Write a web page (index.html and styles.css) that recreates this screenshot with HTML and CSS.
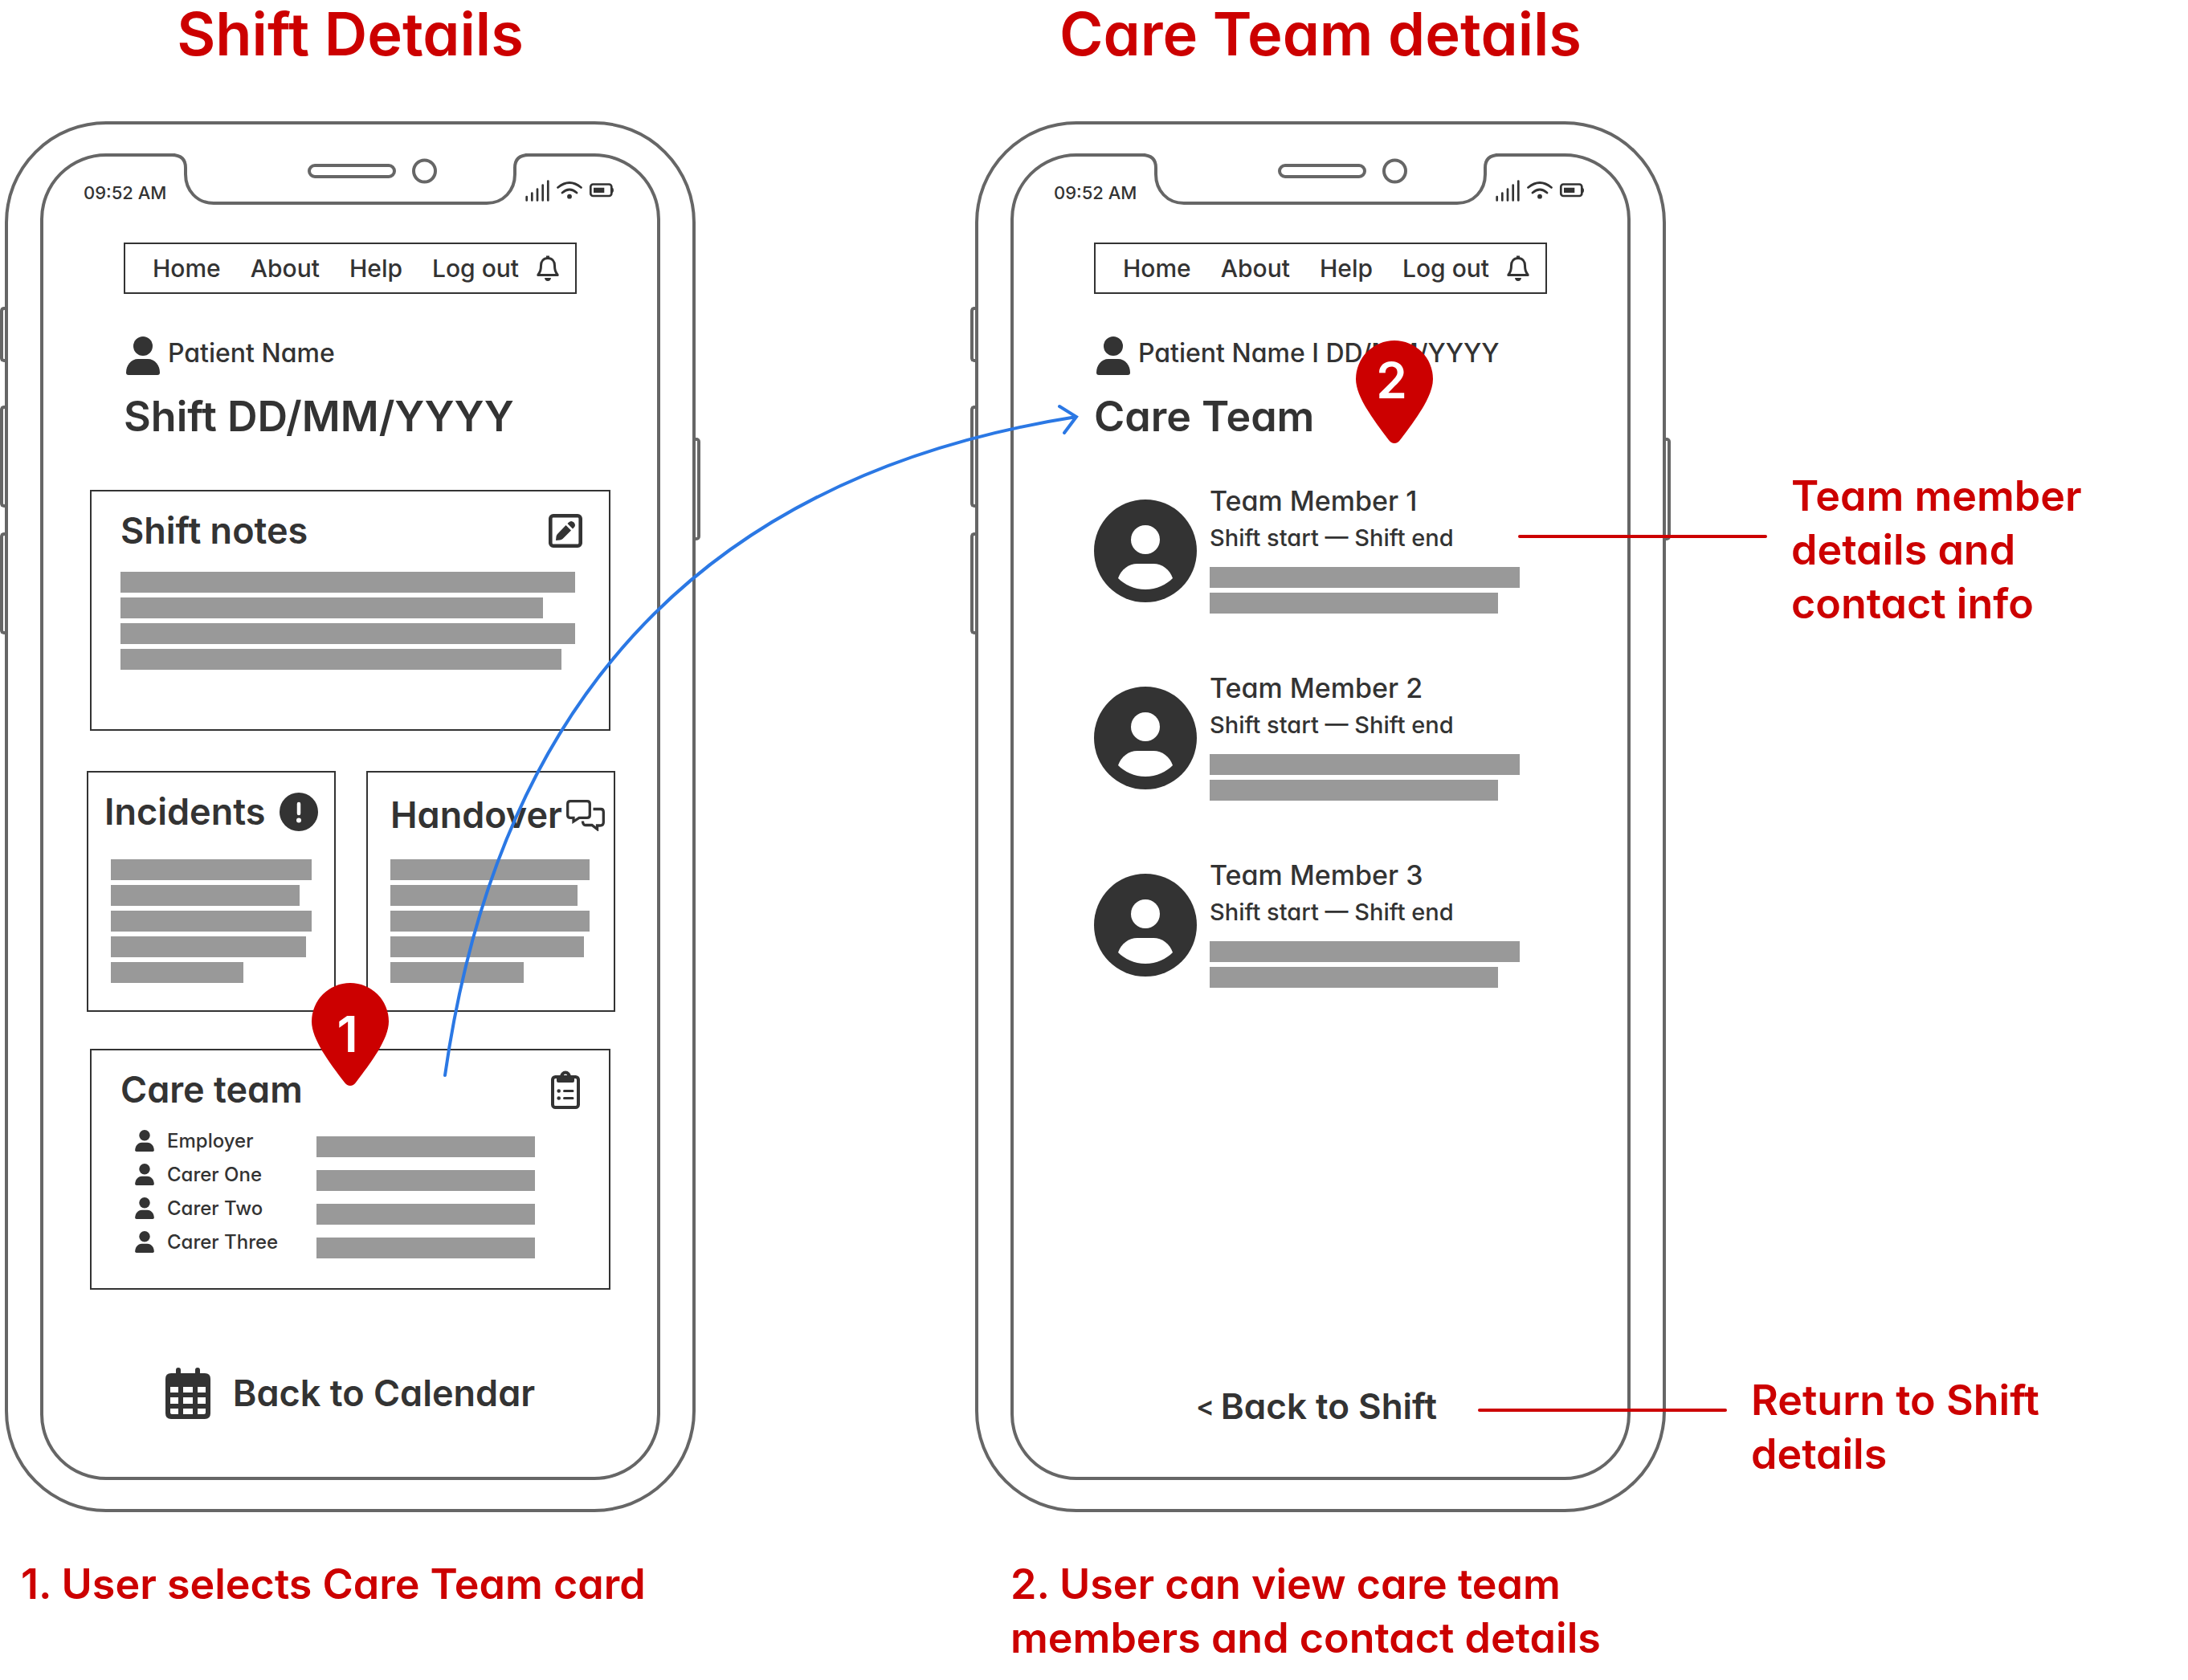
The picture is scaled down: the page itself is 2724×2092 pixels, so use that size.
FILE: index.html
```
<!DOCTYPE html>
<html lang="en">
<head>
<meta charset="utf-8">
<meta name="viewport" content="width=device-width, initial-scale=1">
<title>Shift Details – Care Team flow</title>
<link rel="stylesheet" href="styles.css">
</head>
<body>
<svg class="sprite" aria-hidden="true">
  <symbol id="i-notch" viewBox="0 0 444 70">
    <path d="M4 0H440V8H4Z" fill="#fff"/>
    <g fill="none" stroke="#666" stroke-width="4">
      <path d="M0 4Q17 4 17 20V28C17 48 31 64 52 64H392C413 64 427 48 427 28V20Q427 4 444 4"/>
      <rect x="171" y="17" width="106" height="14" rx="7"/>
      <circle cx="314.500" cy="24" r="13.500"/>
    </g>
  </symbol>
  <symbol id="i-status" viewBox="0 0 110 34">
    <g fill="none" stroke="#333" stroke-width="2.700" stroke-linecap="round">
      <path d="M1.700 22V26.500M8.300 17.500V26.500M15 12.500V26.500M21.700 7.500V26.500M28.300 2.500V26.500"/>
      <path d="M40.500 10.500Q55 -1.500 69.500 10.500M46 17Q55 9 64 17"/>
      <rect x="81.300" y="6.500" width="26" height="14.500" rx="3"/>
    </g>
    <circle cx="55" cy="21.700" r="2.900" fill="#333"/>
    <path d="M85 10.700H98.300V17H85ZM107 10.500Q110 10.500 110 14T107 17.500Z" fill="#333"/>
  </symbol>
  <symbol id="i-bell" viewBox="0 0 28 32">
    <path d="M14 3.500C8.500 3.500 5.500 7.500 5.500 12.500C5.500 18.500 4.500 20 1.800 24.500H26.200C23.500 20 22.500 18.500 22.500 12.500C22.500 7.500 19.500 3.500 14 3.500Z" fill="none" stroke="#333" stroke-width="3" stroke-linejoin="round"/>
    <path d="M12 0.500H16V4H12ZM10 28H18Q17.500 32 14 32T10 28Z" fill="#333"/>
  </symbol>
  <symbol id="i-person" viewBox="0 0 42 48">
    <circle cx="21" cy="12" r="12"/>
    <path d="M15 28H27C36 28 42 36 42 45Q42 48 39 48H3Q0 48 0 45C0 36 6 28 15 28Z"/>
  </symbol>
  <symbol id="i-avatar" viewBox="0 0 128 128">
    <circle cx="64" cy="64" r="64"/>
    <g fill="#fff">
      <circle cx="64" cy="50" r="18"/>
      <path d="M30 98C34 87 43 80 54 80H74C85 80 94 87 98 98C90 106 78 112 64 112S38 106 30 98Z"/>
    </g>
  </symbol>
  <symbol id="i-edit" viewBox="0 0 42 42">
    <rect x="2.300" y="2.300" width="37.400" height="37.400" rx="3.500" fill="none" stroke="#333" stroke-width="4.600"/>
    <path d="M9 33L9.500 28Q10 26 11 25L21.500 14L28 20.500L17.500 31Q16 32 14 32.500ZM23.500 12L25 10.500Q28 7.500 31.500 10.500Q34.500 14 31.500 17L30 18.500Z"/>
  </symbol>
  <symbol id="i-alert" viewBox="0 0 48 48">
    <circle cx="24" cy="24" r="24"/>
    <path d="M24 14V26" stroke="#fff" stroke-width="4.500" stroke-linecap="round"/>
    <circle cx="24" cy="34.500" r="3" fill="#fff"/>
  </symbol>
  <symbol id="i-chat" viewBox="0 0 48 39">
    <g fill="none" stroke="#333" stroke-width="3.300">
      <path d="M5 1.700H26Q29.300 1.700 29.300 5V19Q29.300 22.300 26 22.300H16L9 27V22.300H5Q1.700 22.300 1.700 19V5Q1.700 1.700 5 1.700Z"/>
      <path d="M33.500 11.500H43Q46.300 11.500 46.300 15V28Q46.300 32 42 32H38.500V36.500L32 31.500H24Q20.500 31.500 20.500 26.500"/>
    </g>
  </symbol>
  <symbol id="i-clipboard" viewBox="0 0 42 48">
    <rect x="5" y="8" width="32" height="38" rx="3.500" fill="none" stroke="#333" stroke-width="4"/>
    <path fill-rule="evenodd" d="M10 8H14A7 7.500 0 0 1 28 8H32V13Q32 15 30 15H12Q10 15 10 13ZM18.700 6.700A2.300 2.300 0 1 0 23.300 6.700A2.300 2.300 0 1 0 18.700 6.700Z"/>
    <circle cx="12.700" cy="25.500" r="2.300"/>
    <circle cx="12.700" cy="34.500" r="2.300"/>
    <path d="M19.500 25.500H30M19.500 34.500H30" stroke="#333" stroke-width="3" stroke-linecap="round"/>
  </symbol>
  <symbol id="i-calendar" viewBox="0 0 56 64">
    <path d="M16 3V12M40 3V12" stroke="#333" stroke-width="6" stroke-linecap="round"/>
    <path fill-rule="evenodd" d="M7 7H49Q56 7 56 14V57Q56 64 49 64H7Q0 64 0 57V14Q0 7 7 7ZM6 24V31H16V24ZM22 24V31H34V24ZM40 24V31H50V24ZM6 37V45H16V37ZM22 37V45H34V37ZM40 37V45H50V37ZM6 51V56Q6 58 8 58H16V51ZM22 51V58H34V51ZM40 51V58H48Q50 58 50 56V51Z"/>
  </symbol>
  <symbol id="i-pin" viewBox="0 0 96 128">
    <path d="M48 0A48 48 0 0 0 0 48C0 70 22 99 41 124Q44 128 48 128T55 124C74 99 96 70 96 48A48 48 0 0 0 48 0Z" fill="#c00"/>
  </symbol>
</svg>

<main class="board">
  <h2 class="board-title">Shift Details</h2>
  <h2 class="board-title">Care Team details</h2>

  <section class="phone" aria-label="Shift details screen">
    <i class="key key-a"></i><i class="key key-b"></i><i class="key key-c"></i><i class="key key-power"></i>
    <div class="screen">
      <svg class="notch" aria-hidden="true"><use href="#i-notch"/></svg>
      <div class="status"><span>09:52 AM</span><svg class="status-icons" aria-hidden="true"><use href="#i-status"/></svg></div>
      <nav class="menu">
        <a href="#">Home</a><a href="#">About</a><a href="#">Help</a><a href="#">Log out</a>
        <button class="bell" type="button" aria-label="Notifications"><svg aria-hidden="true"><use href="#i-bell"/></svg></button>
      </nav>
      <p class="patient"><svg class="person" aria-hidden="true"><use href="#i-person"/></svg>Patient Name</p>
      <h1 class="heading">Shift DD/MM/YYYY</h1>

      <div class="cards">
        <article class="card card-notes">
          <header class="card-head"><h3>Shift notes</h3><button type="button" aria-label="Edit notes"><svg class="icon-42" aria-hidden="true"><use href="#i-edit"/></svg></button></header>
          <div class="bars"><i style="width:100%"></i><i style="width:93%"></i><i style="width:100%"></i><i style="width:97%"></i></div>
        </article>
        <div class="pair">
          <article class="card card-incidents">
            <header class="card-head"><h3>Incidents</h3><svg class="icon-48" aria-hidden="true"><use href="#i-alert"/></svg></header>
            <div class="bars"><i style="width:100%"></i><i style="width:94%"></i><i style="width:100%"></i><i style="width:97%"></i><i style="width:66%"></i></div>
          </article>
          <article class="card card-handover">
            <header class="card-head"><h3>Handover</h3><svg class="icon-chat" aria-hidden="true"><use href="#i-chat"/></svg></header>
            <div class="bars"><i style="width:100%"></i><i style="width:94%"></i><i style="width:100%"></i><i style="width:97%"></i><i style="width:67%"></i></div>
          </article>
        </div>
        <article class="card card-team">
          <header class="card-head"><h3>Care team</h3><svg class="icon-clip" aria-hidden="true"><use href="#i-clipboard"/></svg></header>
          <ul class="team">
            <li><svg aria-hidden="true"><use href="#i-person"/></svg><span>Employer</span><i></i></li>
            <li><svg aria-hidden="true"><use href="#i-person"/></svg><span>Carer One</span><i></i></li>
            <li><svg aria-hidden="true"><use href="#i-person"/></svg><span>Carer Two</span><i></i></li>
            <li><svg aria-hidden="true"><use href="#i-person"/></svg><span>Carer Three</span><i></i></li>
          </ul>
        </article>
      </div>
      <a class="back back-calendar" href="#"><svg aria-hidden="true"><use href="#i-calendar"/></svg>Back to Calendar</a>
    </div>
    <div class="pin pin-1"><svg aria-hidden="true"><use href="#i-pin"/></svg><b>1</b></div>
  </section>

  <section class="phone" aria-label="Care team screen">
    <i class="key key-a"></i><i class="key key-b"></i><i class="key key-c"></i><i class="key key-power"></i>
    <div class="screen">
      <svg class="notch" aria-hidden="true"><use href="#i-notch"/></svg>
      <div class="status"><span>09:52 AM</span><svg class="status-icons" aria-hidden="true"><use href="#i-status"/></svg></div>
      <nav class="menu">
        <a href="#">Home</a><a href="#">About</a><a href="#">Help</a><a href="#">Log out</a>
        <button class="bell" type="button" aria-label="Notifications"><svg aria-hidden="true"><use href="#i-bell"/></svg></button>
      </nav>
      <p class="patient"><svg class="person" aria-hidden="true"><use href="#i-person"/></svg>Patient Name I DD/MM/YYYY</p>
      <h1 class="heading">Care Team</h1>
      <ul class="members">
        <li>
          <svg aria-hidden="true"><use href="#i-avatar"/></svg>
          <div><h3>Team Member 1</h3><p>Shift start — Shift end</p>
            <div class="bars"><i style="width:100%"></i><i style="width:93%"></i></div></div>
        </li>
        <li>
          <svg aria-hidden="true"><use href="#i-avatar"/></svg>
          <div><h3>Team Member 2</h3><p>Shift start — Shift end</p>
            <div class="bars"><i style="width:100%"></i><i style="width:93%"></i></div></div>
        </li>
        <li>
          <svg aria-hidden="true"><use href="#i-avatar"/></svg>
          <div><h3>Team Member 3</h3><p>Shift start — Shift end</p>
            <div class="bars"><i style="width:100%"></i><i style="width:93%"></i></div></div>
        </li>
      </ul>
      <a class="back back-shift" href="#"><span>&lt;</span>Back to Shift</a>
    </div>
    <div class="pin pin-2"><svg aria-hidden="true"><use href="#i-pin"/></svg><b>2</b></div>
  </section>

  <p class="caption">1. User selects Care Team card</p>
  <p class="caption caption-2">2. User can view care team members and contact details</p>

  <aside class="notes">
    <p class="note note-member">Team member details and contact info</p>
    <p class="note note-return">Return to Shift details</p>
  </aside>

  <svg class="flow" viewBox="0 0 1350 1350" aria-hidden="true">
    <path d="M554 1339Q655 627 1340 519M1319 506L1340 519L1325 539"/>
  </svg>
</main>
</body>
</html>
```
FILE: styles.css
```
* { box-sizing: border-box; }

body {
  margin: 0;
  background: #fff;
  color: #333;
  font-family: Inter, "Liberation Sans", sans-serif;
  font-weight: 500;
  font-feature-settings: "cv11";
}

h1, h2, h3, p, ul { margin: 0; padding: 0; }
h1, h2, h3 { font-weight: 600; }
ul { list-style: none; }
a { color: inherit; text-decoration: none; }
i { display: block; }
svg { display: block; flex: none; fill: #333; }
button { display: block; padding: 0; border: 0; background: none; cursor: pointer; }
.sprite { position: absolute; width: 0; height: 0; }

/* Board */
.board {
  position: relative;
  display: grid;
  grid-template-columns: 1208px 972px 1fr;
  grid-template-rows: auto auto auto;
}
.board-title {
  width: 872px;
  padding-bottom: 67px;
  font-size: 74px;
  line-height: 84px;
  text-align: center;
  color: #c00;
}
.caption, .note {
  font-size: 52px;
  font-weight: 600;
  line-height: 67px;
  color: #c00;
}
.caption { max-width: 872px; margin-top: 56px; padding-left: 26px; }
.caption-2 { padding-left: 50px; }

/* Device frame */
.phone {
  position: relative;
  display: flex;
  width: 860px;
  margin-left: 6px;
  padding: 36px 40px;
  border: 4px solid #666;
  border-radius: 126px;
}
.screen {
  position: relative;
  display: flex;
  flex: 1;
  flex-direction: column;
  border: 4px solid #666;
  border-radius: 82px;
}
.notch { position: absolute; top: -6px; left: calc(50% - 222px); width: 444px; height: 70px; }
.key {
  position: absolute;
  left: -10px;
  width: 10px;
  border: 4px solid #666;
  border-right: 0;
  border-radius: 5px 0 0 5px;
}
.key-a { top: 227px; height: 69px; }
.key-b { top: 350px; height: 127px; }
.key-c { top: 508px; height: 127px; }
.key-power {
  top: 390px;
  right: -10px;
  left: auto;
  height: 128px;
  border-right: 4px solid #666;
  border-left: 0;
  border-radius: 0 5px 5px 0;
}

/* Status bar and menu */
.status {
  display: flex;
  align-items: center;
  justify-content: space-between;
  height: 90px;
  padding: 0 54px 0 50px;
  font-size: 22px;
}
.status-icons { width: 110px; height: 34px; }
.menu {
  display: flex;
  align-items: center;
  height: 64px;
  margin: 17px 100px 0;
  padding: 0 20px 0 34px;
  border: 2px solid #333;
  font-size: 30px;
  line-height: 36px;
  white-space: nowrap;
}
.menu a + a { margin-left: 37px; }
.bell { margin-left: auto; }
.bell svg { width: 28px; height: 32px; }

/* Screen headings */
.patient {
  display: flex;
  gap: 10px;
  margin-top: 53px;
  padding-left: 103px;
  font-size: 32px;
  line-height: 42px;
  white-space: nowrap;
}
.person { width: 42px; height: 48px; }
.heading {
  margin-top: 20px;
  padding-left: 100px;
  font-size: 52px;
  line-height: 64px;
}

/* Cards */
.cards { margin-top: 59px; padding: 0 58px; }
.card { border: 2px solid #333; padding: 22px 33px 74px 36px; }
.card-head {
  display: flex;
  align-items: center;
  justify-content: space-between;
  height: 54px;
}
.card-head h3 { font-size: 45px; line-height: 54px; }
.icon-42 { width: 42px; height: 42px; }
.icon-48 { width: 48px; height: 48px; }
.icon-chat { width: 48px; height: 39px; }
.icon-clip { width: 42px; height: 48px; }
.bars { display: grid; gap: 6px; }
.bars i { height: 26px; background: #999; }
.card-notes .bars { margin-top: 24px; margin-right: 9px; }
.pair { display: grid; grid-template-columns: 1fr 1fr; gap: 38px; margin: 50px -6px 46px -4px; }
.card-incidents { padding: 22px 20px 34px; }
.card-incidents .bars { margin: 32px 8px 0; }
.card-handover { padding: 26px 11px 34px 28px; }
.card-handover .bars { margin: 28px 19px 0 0; }
.card-team { padding-bottom: 37px; }
.team { margin-top: 15px; padding-left: 18px; }
.team li {
  display: grid;
  grid-template-columns: 24px 170px 272px;
  gap: 16px;
  align-items: center;
  height: 42px;
  font-size: 24px;
}
.team svg { width: 24px; height: 27px; }
.team i { height: 26px; margin-top: 16px; background: #999; }

/* Member list */
.members { display: grid; gap: 70px; margin-top: 50px; padding-left: 100px; }
.members li { display: flex; gap: 16px; }
.members svg { width: 128px; height: 128px; margin-top: 21px; }
.members h3 { font-size: 34px; font-weight: 500; line-height: 46px; }
.members p { font-size: 29px; line-height: 46px; }
.members .bars { width: 386px; margin-top: 13px; }

/* Back links */
.back {
  display: flex;
  align-items: center;
  justify-content: center;
  font-size: 45px;
  font-weight: 600;
  line-height: 64px;
}
.back-calendar { gap: 28px; margin: 97px 0 72px; }
.back-calendar svg { width: 56px; height: 64px; }
.back-shift { gap: 8px; margin: auto 0 56px; padding-right: 10px; font-size: 44px; }
.back-shift span { font-size: 34px; }

/* Numbered pins */
.pin {
  position: absolute;
  display: flex;
  align-items: center;
  justify-content: center;
  width: 96px;
  height: 128px;
  padding-right: 7px;
  font-size: 62px;
  line-height: 62px;
  color: #fff;
}
.pin svg { position: absolute; top: 0; left: 0; width: 96px; height: 128px; }
.pin b { position: relative; font-weight: 600; }
.pin-1 { top: 1069px; left: 378px; }
.pin-2 { top: 269px; left: 470px; padding-bottom: 28px; }

/* Side notes with leader lines */
.notes { grid-column: 3; grid-row: 1 / 4; }
.note { position: relative; max-width: 420px; }
.note::before {
  content: "";
  position: absolute;
  left: -340px;
  width: 310px;
  height: 4px;
  border-radius: 2px;
  background: #c00;
}
.note-member { margin: 584px 0 0 50px; }
.note-member::before { top: 82px; }
.note-return { margin-top: 925px; }
.note-return::before { top: 44px; }

/* Arrow between the screens */
.flow { position: absolute; top: 0; left: 0; width: 1350px; height: 1350px; pointer-events: none; }
.flow path { fill: none; stroke: #2b78e4; stroke-width: 4; stroke-linecap: round; }
```
